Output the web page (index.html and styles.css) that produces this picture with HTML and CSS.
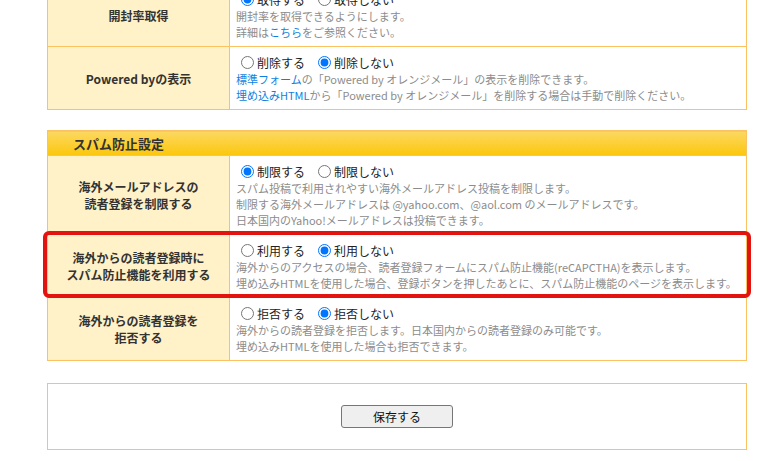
FILE: index.html
```html
<!DOCTYPE html>
<html lang="ja">
<head>
  <meta charset="UTF-8" />
  <meta name="viewport" content="width=device-width, initial-scale=1.0"/>
  <title>設定</title>
  <link rel="stylesheet" href="styles.css">
</head>
<body>
  <div class="page">
    <table class="settings first">
      <tr>
        <th>開封率取得</th>
        <td>
          <div class="choices">
            <label><input type="radio" name="open" checked>取得する</label>
            <label><input type="radio" name="open">取得しない</label>
          </div>
          <p class="note">開封率を取得できるようにします。<br>詳細は<a href="#">こちら</a>をご参照ください。</p>
        </td>
      </tr>
      <tr>
        <th>Powered byの表示</th>
        <td>
          <div class="choices">
            <label><input type="radio" name="powered">削除する</label>
            <label><input type="radio" name="powered" checked>削除しない</label>
          </div>
          <p class="note"><a href="#">標準フォーム</a>の「Powered by オレンジメール」の表示を削除できます。<br><a href="#">埋め込みHTML</a>から「Powered by オレンジメール」を削除する場合は手動で削除ください。</p>
        </td>
      </tr>
    </table>

    <div class="spam">
      <table class="settings">
        <tr>
          <th colspan="2" class="head">スパム防止設定</th>
        </tr>
        <tr>
          <th>海外メールアドレスの<br>読者登録を制限する</th>
          <td>
            <div class="choices">
              <label><input type="radio" name="limit" checked>制限する</label>
              <label><input type="radio" name="limit">制限しない</label>
            </div>
            <p class="note">スパム投稿で利用されやすい海外メールアドレス投稿を制限します。<br>制限する海外メールアドレスは @yahoo.com、@aol.com のメールアドレスです。<br>日本国内のYahoo!メールアドレスは投稿できます。</p>
          </td>
        </tr>
        <tr>
          <th>海外からの読者登録時に<br>スパム防止機能を利用する</th>
          <td>
            <div class="choices">
              <label><input type="radio" name="captcha">利用する</label>
              <label><input type="radio" name="captcha" checked>利用しない</label>
            </div>
            <p class="note">海外からのアクセスの場合、読者登録フォームにスパム防止機能(reCAPCTHA)を表示します。<br>埋め込みHTMLを使用した場合、登録ボタンを押したあとに、スパム防止機能のページを表示します。</p>
          </td>
        </tr>
        <tr>
          <th>海外からの読者登録を<br>拒否する</th>
          <td>
            <div class="choices">
              <label><input type="radio" name="deny">拒否する</label>
              <label><input type="radio" name="deny" checked>拒否しない</label>
            </div>
            <p class="note">海外からの読者登録を拒否します。日本国内からの読者登録のみ可能です。<br>埋め込みHTMLを使用した場合も拒否できます。</p>
          </td>
        </tr>
      </table>
      <div class="highlight"></div>
    </div>

    <div class="actions">
      <button type="button">保存する</button>
    </div>
  </div>
</body>
</html>
```

FILE: styles.css
```css
body {
  margin: 0;
  background: #fff;
  font-family: "Noto Sans CJK JP", sans-serif;
  color: #333;
}
.page {
  width: 700px;
  margin-left: 47px;
}
.settings {
  width: 100%;
  border-collapse: collapse;
  border: 1px solid #fbc261;
}
.settings.first {
  margin-top: -17px;
}
.settings th,
.settings td {
  border: 1px solid #fbc261;
}
.settings th {
  width: 179px;
  background: #fff1c8;
  font-size: 12px;
  font-weight: bold;
  line-height: 17px;
  text-align: center;
  color: #333;
}
.settings th.head {
  height: 24px;
  padding: 0 0 0 25px;
  text-align: left;
  font-size: 13px;
  background: linear-gradient(#fcd862, #fbc70b);
}
.settings td {
  padding: 7px 6px 6px;
  vertical-align: top;
}
.choices {
  display: flex;
  gap: 8px;
  height: 17px;
  align-items: center;
  font-size: 12px;
  color: #222;
}
.choices label {
  display: flex;
  align-items: center;
}
.choices input {
  width: 13px;
  height: 13px;
  margin: 0 3px 0 5px;
}
.note {
  margin: 0;
  font-size: 11px;
  line-height: 16px;
  color: #8c8c8c;
}
.note a {
  color: #0e7fe1;
  text-decoration: none;
}
.spam {
  position: relative;
  margin-top: 20px;
}
.highlight {
  position: absolute;
  left: -4px;
  top: 101px;
  width: 708px;
  height: 67px;
  box-sizing: border-box;
  border: 4px solid #e3140f;
  border-radius: 6px;
}
.actions {
  margin-top: 22px;
  border: 1px solid #fbc261;
  padding: 21px 0;
  display: flex;
  justify-content: center;
}
.actions button {
  width: 112px;
  height: 23px;
  padding: 0;
  font-family: "Noto Sans CJK JP", sans-serif;
  font-size: 12px;
  color: #111;
  background: #efefef;
  border: 1px solid #767676;
  border-radius: 3px;
}
```
